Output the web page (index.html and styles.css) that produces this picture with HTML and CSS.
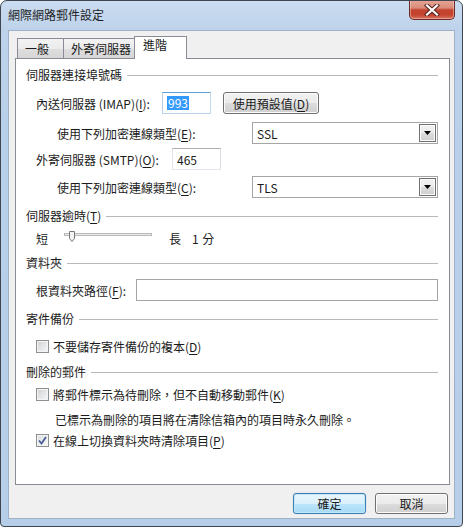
FILE: index.html
```html
<!DOCTYPE html>
<html lang="zh-Hant">
<head>
<meta charset="utf-8">
<title>網際網路郵件設定</title>
<link rel="stylesheet" href="styles.css">
</head>
<body>
<div class="window">
  <div class="titlebar">
    <span class="title">網際網路郵件設定</span>
    <div class="close">
      <svg width="16" height="12" viewBox="0 0 16 12"><path d="M3 1.5 L13 10.5 M13 1.5 L3 10.5" stroke="#5a2420" stroke-width="4.2" stroke-linecap="square"/><path d="M3 1.5 L13 10.5 M13 1.5 L3 10.5" stroke="#ffffff" stroke-width="2.2" stroke-linecap="square"/></svg>
    </div>
  </div>
  <div class="client">
    <div class="tabs">
      <div class="tab t-general">一般</div>
      <div class="tab t-outgoing">外寄伺服器</div>
      <div class="tab t-adv active">進階</div>
    </div>
    <div class="panel">
      <div class="group-title gt-ports"><span>伺服器連接埠號碼</span></div>
      <div class="row r-imap">
        <span class="label l-imap">內送伺服器 (IMAP)(<u>I</u>):</span>
        <div class="textbox tb-port focused"><span class="selected">993</span></div>
        <div class="btn btn-defaults">使用預設值(<u>D</u>)</div>
      </div>
      <div class="row r-enc1">
        <span class="label l-enc">使用下列加密連線類型(<u>E</u>):</span>
        <div class="combo"><span class="combo-text">SSL</span><span class="combo-arrow"><svg width="7" height="4" viewBox="0 0 7 4"><path d="M0 0 H7 L3.5 4 Z" fill="#000"/></svg></span></div>
      </div>
      <div class="row r-smtp">
        <span class="label l-smtp">外寄伺服器 (SMTP)(<u>O</u>):</span>
        <div class="textbox tb-port"><span>465</span></div>
      </div>
      <div class="row r-enc2">
        <span class="label l-enc">使用下列加密連線類型(<u>C</u>):</span>
        <div class="combo"><span class="combo-text">TLS</span><span class="combo-arrow"><svg width="7" height="4" viewBox="0 0 7 4"><path d="M0 0 H7 L3.5 4 Z" fill="#000"/></svg></span></div>
      </div>

      <div class="group-title gt-timeout"><span>伺服器逾時(<u>T</u>)</span></div>
      <div class="row r-slider">
        <span class="s-short">短</span>
        <svg class="slider" width="88" height="12" viewBox="0 0 88 12">
          <rect x="0.5" y="2.5" width="87" height="2" fill="#e7eaea" stroke="#b9b9b9"/>
          <path d="M5.5 0.5 H10.5 V7.5 L8 10.5 L5.5 7.5 Z" fill="#f3f3f3" stroke="#7a7a7a"/>
        </svg>
        <span class="s-long">長</span>
        <span class="s-value">1 分</span>
      </div>

      <div class="group-title gt-folder"><span>資料夾</span></div>
      <div class="row r-folder">
        <span class="label l-folder">根資料夾路徑(<u>F</u>):</span>
        <div class="textbox tb-folder"></div>
      </div>

      <div class="group-title gt-sent"><span>寄件備份</span></div>
      <div class="row r-check1">
        <span class="checkbox"></span>
        <span>不要儲存寄件備份的複本(<u>D</u>)</span>
      </div>

      <div class="group-title gt-deleted"><span>刪除的郵件</span></div>
      <div class="row r-check2">
        <span class="checkbox"></span>
        <span>將郵件標示為待刪除，但不自動移動郵件(<u>K</u>)</span>
      </div>
      <div class="row r-note">已標示為刪除的項目將在清除信箱內的項目時永久刪除。</div>
      <div class="row r-check3">
        <span class="checkbox checked"><svg width="9" height="9" viewBox="0 0 9 9"><path d="M1 4.5 L3.5 7.5 L8 1" fill="none" stroke="#4a5f97" stroke-width="1.8"/></svg></span>
        <span>在線上切換資料夾時清除項目(<u>P</u>)</span>
      </div>
    </div>
    <div class="actions">
      <div class="btn btn-dialog default">確定</div>
      <div class="btn btn-dialog">取消</div>
    </div>
  </div>
</div>
</body>
</html>
```

FILE: styles.css
```css
* { box-sizing: border-box; }
html, body { margin: 0; padding: 0; }
body {
  width: 463px;
  height: 527px;
  overflow: hidden;
  background: #ffffff;
  font-family: "Noto Sans CJK TC", "Microsoft JhengHei", sans-serif;
  font-size: 12px;
  color: #1b1b1b;
}
u { text-decoration: underline; text-underline-offset: 2px; }

.window {
  width: 463px;
  height: 527px;
  border: 1px solid #3f4650;
  border-radius: 7px 7px 4px 4px;
  background: linear-gradient(180deg, #cadcf1 0px, #bed3eb 28px, #b9d0ea 120px, #b7cee8 100%);
  display: flex;
  flex-direction: column;
  overflow: hidden;
}

.titlebar {
  height: 29px;
  flex: none;
  display: flex;
  align-items: flex-start;
}
.title {
  margin: 6px 0 0 7px;
  line-height: 16px;
  color: #1e1e1e;
}
.close {
  margin: -1px 7px 0 auto;
  width: 46px;
  height: 20px;
  border: 1px solid #6a2b26;
  border-top: none;
  border-radius: 0 0 5px 5px;
  background: linear-gradient(180deg, #e6a696 0%, #d98b79 42%, #c3442f 52%, #c4432e 78%, #d77461 100%);
  box-shadow: inset 0 0 0 1px rgba(255, 220, 210, 0.45);
  display: flex;
  align-items: center;
  justify-content: center;
}

.client {
  flex: 1;
  margin: 0 7px 7px 7px;
  background: #f0f0f0;
  border: 1px solid #9fb1c6;
  padding: 5px 0 0 6px;
  display: flex;
  flex-direction: column;
}

.tabs {
  height: 22px;
  display: flex;
  align-items: flex-start;
  padding-left: 2px;
  position: relative;
  z-index: 1;
}
.tab {
  height: 20px;
  margin-top: 2px;
  border: 1px solid #898c95;
  border-bottom: none;
  background: linear-gradient(180deg, #f3f3f3 0%, #ebebeb 50%, #dedede 50%, #d6d6d6 100%);
  padding: 2px 0 0 7px;
  line-height: 16px;
  color: #1b1b1b;
  white-space: nowrap;
}
.t-general { width: 47px; }
.t-outgoing { width: 72px; margin-left: -1px; }
.t-adv { width: 53px; margin-left: -1px; }
.tab.active {
  margin-top: 0;
  height: 23px;
  background: #ffffff;
  padding: 0 0 0 8px;
}

.panel {
  width: 435px;
  height: 427px;
  border: 1px solid #898c95;
  background: #ffffff;
  padding: 0 11px 0 10px;
  display: flex;
  flex-direction: column;
}

.group-title {
  display: flex;
  align-items: center;
  height: 16px;
  line-height: 16px;
  white-space: nowrap;
}
.group-title::after {
  content: "";
  flex: 1;
  border-top: 1px solid #b9b9b9;
  margin-left: 5px;
}
.gt-ports { margin-top: 8px; }
.gt-timeout { margin-top: 10px; }
.gt-folder { margin-top: 8px; }
.gt-sent { margin-top: 10px; }
.gt-deleted { margin-top: 9px; }

.row {
  display: flex;
  align-items: center;
  white-space: nowrap;
  padding-left: 10px;
}
.r-imap { height: 22px; margin-top: 9px; }
.r-enc1 { height: 22px; margin-top: 8px; padding-left: 31px; }
.r-smtp { height: 22px; margin-top: 4px; }
.r-enc2 { height: 22px; margin-top: 6px; padding-left: 31px; }
.r-slider { height: 18px; margin-top: 5px; }
.r-folder { height: 22px; margin-top: 8px; }
.r-check1 { height: 18px; margin-top: 10px; }
.r-check2 { height: 18px; margin-top: 5px; }
.r-note { height: 18px; margin-top: 7px; padding-left: 29px; }
.r-check3 { height: 18px; margin-top: 3px; }

.label { flex: none; }
.l-imap { width: 126px; }
.l-smtp { width: 136px; }
.l-enc { width: 195px; }
.l-folder { width: 100px; }

.textbox {
  height: 22px;
  border: 1px solid #abadb3;
  border-color: #abadb3 #dbdfe6 #e3e9ef #e2e3ea;
  background: #ffffff;
  display: flex;
  align-items: center;
  padding-left: 4px;
}
.tb-port { width: 49px; }
.tb-folder { width: 302px; border-color: #a5a5a5; }
.textbox.focused { border-color: #5a9fd6 #c5daed #b7d4ee #b5cfe7; }
.selected {
  background: #3399ff;
  color: #ffffff;
  line-height: 14px;
  padding: 0 1px;
}

.btn {
  height: 22px;
  border: 1px solid #707070;
  border-radius: 3px;
  background: linear-gradient(180deg, #f2f2f2 0%, #ebebeb 50%, #dddddd 50%, #cfcfcf 100%);
  box-shadow: inset 0 0 0 1px #fbfbfb;
  display: flex;
  align-items: center;
  justify-content: center;
  white-space: nowrap;
}
.btn-defaults { width: 96px; margin-left: 12px; }

.combo {
  width: 186px;
  height: 22px;
  border: 1px solid #a5a5a5;
  background: #ffffff;
  display: flex;
  align-items: center;
  padding-left: 4px;
}
.combo-text { flex: 1; }
.combo-arrow {
  width: 17px;
  height: 18px;
  margin-right: 1px;
  border: 1px solid #707070;
  background: linear-gradient(180deg, #f2f2f2 0%, #ebebeb 50%, #dddddd 50%, #cfcfcf 100%);
  box-shadow: inset 0 0 0 1px #fafafa;
  display: flex;
  align-items: center;
  justify-content: center;
}

.s-short { width: 12px; margin-right: 16px; }
.slider { flex: none; margin-top: -3px; }
.s-long { margin-left: 17px; width: 12px; }
.s-value { margin-left: 11px; word-spacing: 1px; }

.checkbox {
  width: 13px;
  height: 13px;
  flex: none;
  margin-right: 4px;
  border: 1px solid #8e8f8f;
  background: linear-gradient(135deg, #cfd1d4 0%, #e4e5e6 50%, #f7f7f7 100%);
  box-shadow: inset 0 0 0 1px #f4f4f4;
  display: flex;
  align-items: center;
  justify-content: center;
}
.checkbox.checked { background: linear-gradient(135deg, #dadcdf 0%, #eeeeef 60%, #fafafa 100%); }

.actions {
  display: flex;
  justify-content: flex-end;
  gap: 9px;
  margin-top: 8px;
  padding-right: 6px;
}
.btn-dialog { width: 73px; height: 21px; }
.btn.default {
  border-color: #3c7fb1;
  background: linear-gradient(180deg, #eaf6fd 0%, #d9f0fc 50%, #bee6fd 50%, #a7d9f5 100%);
  box-shadow: inset 0 0 0 1px #c5e6f8, 0 0 1px #6bb3e6;
}
```
